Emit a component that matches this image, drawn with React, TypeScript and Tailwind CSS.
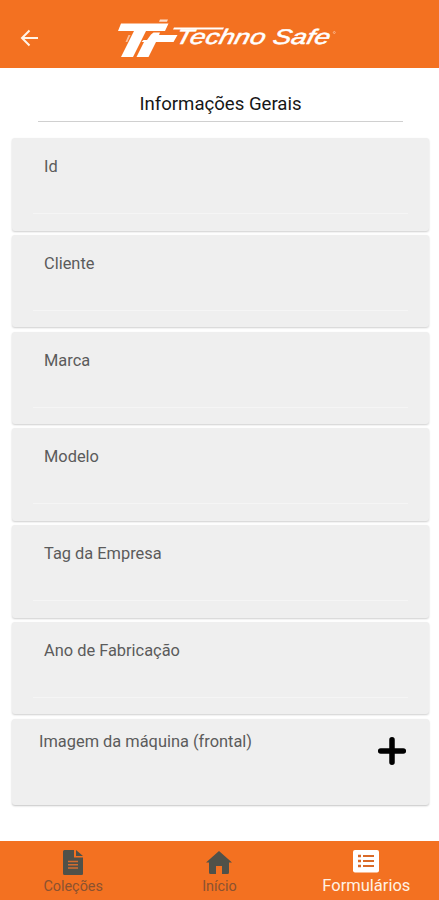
import React from "react";

const fields = ["Id", "Cliente", "Marca", "Modelo", "Tag da Empresa", "Ano de Fabricação"];

function Logo() {
  return (
    <svg className="ml-[78px] h-[44px] w-[222px]" viewBox="116 16 222 44" fill="white" aria-label="Techno Safe">
      <path d="M121 23.5H168.5L165 31H146L133 57H121L134 31H118Z" />
      <path d="M128.5 35H130.5L127.3 42H125.5Z" opacity=".55" />
      <path d="M160 19.5H168L167 21.8H159Z" opacity=".75" />
      <path d="M151 34.5L153.5 32.5H160L159 35H177.5L173.5 42H156L148.5 57H136.5L144 42H141.5L143.5 40H147Z" />
      <path d="M174 27.5H224L223 29.4H173Z" />
      <g transform="translate(174.5 43.6) skewX(-14)">
        <text x="0" y="0" textLength="154" lengthAdjust="spacingAndGlyphs" fontSize="21" fontStyle="italic" fontFamily="Liberation Sans, sans-serif" stroke="white" strokeWidth=".5">Techno Safe</text>
      </g>
      <circle cx="334.3" cy="32.5" r="1" fill="none" stroke="white" strokeWidth=".5" opacity=".8" />
    </svg>
  );
}

function Field({ label }: { label: string }) {
  return (
    <section className="h-[92.5px] rounded-[3px] bg-[#efefef] px-[21px] pt-[19px] shadow-[0_1px_2px_#cfcfcf]">
      <label className="block h-[56px] pl-[11px] text-[16.4px] leading-5 text-[#5b5b5b]">{label}</label>
      <div className="h-px bg-[#f5f5f5]" />
    </section>
  );
}

export default function App() {
  return (
    <div className="flex h-[900px] w-full flex-col overflow-hidden bg-white font-['Roboto',sans-serif]">
      <header className="flex h-[68px] shrink-0 items-center bg-[#f37121] pt-[8px] pl-[20px]">
        <svg className="h-[18px] w-[18px]" viewBox="0 0 18 18" fill="none" stroke="#fff4e8" strokeWidth="2">
          <path d="M18 9H2.5M9.5 1.5L2 9L9.5 16.5" />
        </svg>
        <Logo />
      </header>
      <main className="flex flex-1 flex-col pr-[10px] pl-[12px]">
        <h1 className="mr-[26px] ml-[26px] h-[54px] border-b border-[#d0d0d0] pt-[24px] text-center text-[18.6px] leading-6 text-[#171717]">Informações Gerais</h1>
        <div className="mt-[16px] flex flex-col gap-[4.25px]">
          {fields.map((label) => <Field key={label} label={label} />)}
          <section className="flex h-[86.5px] justify-between rounded-[3px] bg-[#efefef] pt-[13px] pr-[22px] pl-[27px] shadow-[0_1px_2px_#c4c4c4]">
            <span className="text-[16.4px] leading-5 text-[#5b5b5b]">Imagem da máquina (frontal)</span>
            <svg className="mt-[4px] h-[30px] w-[30px]" viewBox="0 0 30 30" stroke="black" strokeWidth="5.5" strokeLinecap="round">
              <path d="M15 3.7V26.3M3.7 15H26.3" />
            </svg>
          </section>
        </div>
      </main>
      <nav className="grid h-[59px] shrink-0 grid-cols-3 bg-[#f37121] pt-[8px] text-[14.4px] leading-4 text-[#8b5230]">
        <div className="flex flex-col items-center gap-[3px]">
          <svg className="h-[26px] w-[20px]" viewBox="0 0 20 26">
            <path fill="#505149" d="M1.5 1H11V8.5H20V25Q20 26 18.5 26H1.5Q0 26 0 24.5V2.5Q0 1 1.5 1ZM13 1L20 7H13Z" />
            <path d="M5 12.5H15M5 15.8H15M5 19H15" stroke="#d36d31" strokeWidth="1.5" />
          </svg>
          <span className="pt-px">Coleções</span>
        </div>
        <div className="flex flex-col items-center gap-[3px]">
          <svg className="h-[26px] w-[28px]" viewBox="0 0 28 26">
            <path fill="#505149" d="M14 2L27 13.5H24V23.5Q24 25 22.5 25H17V17H11V25H5.5Q4 25 4 23.5V13.5H1Z" />
          </svg>
          <span className="pt-px">Início</span>
        </div>
        <div className="flex flex-col items-center gap-[3px] text-[16.5px] text-[#fff1e3]">
          <svg className="h-[26px] w-[28px]" viewBox="0 0 28 26">
            <rect x="1" y="1" width="26" height="22.5" rx="2" fill="white" />
            <path d="M11 7H22M11 12H22M11 17H22" stroke="#d96a28" strokeWidth="2" />
            <path d="M6 7H9M6 12H9M6 17H9" stroke="#d96a28" strokeWidth="2.7" />
          </svg>
          <span className="pl-px">Formulários</span>
        </div>
      </nav>
    </div>
  );
}
